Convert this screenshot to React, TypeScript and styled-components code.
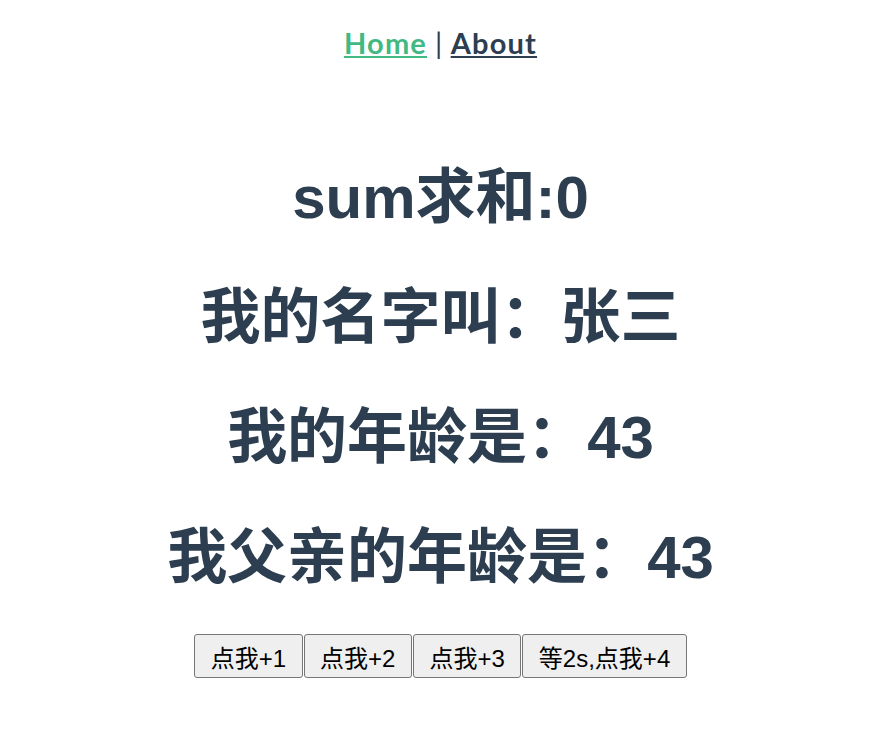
import React, { useState } from "react";
import styled, { createGlobalStyle } from "styled-components";

const GlobalStyle = createGlobalStyle`
  body {
    margin: 0;
    background: #ffffff;
  }
`;

const App = () => {
  const [sum, setSum] = useState<number>(0);
  const name = "张三";
  const age = 43;
  const fatherAge = 43;

  return (
    <>
      <GlobalStyle />
      <Container>
        <Nav>
          <NavLink href="#/" $active>
            Home
          </NavLink>
          <Separator> | </Separator>
          <NavLink href="#/about">About</NavLink>
        </Nav>
        <Main>
          <Title>sum求和:{sum}</Title>
          <Title>我的名字叫：{name}</Title>
          <Title>我的年龄是：{age}</Title>
          <Title>我父亲的年龄是：{fatherAge}</Title>
        </Main>
        <ButtonSection>
          <Button onClick={() => setSum(sum + 1)}>点我+1</Button>
          <Button onClick={() => setSum(sum + 2)}>点我+2</Button>
          <Button onClick={() => setSum(sum + 3)}>点我+3</Button>
          <Button onClick={() => setTimeout(() => setSum((s) => s + 4), 2000)}>
            等2s,点我+4
          </Button>
        </ButtonSection>
      </Container>
    </>
  );
};

export default App;

const Container = styled.div`
  font-family: "Liberation Sans", Arial, "Noto Sans CJK SC", sans-serif;
  text-align: center;
  color: #2c3e50;
`;

const Nav = styled.div`
  padding: 26px 0 0;
  font-family: Lato, "Liberation Sans", sans-serif;
  font-size: 29px;
  line-height: 34px;
  letter-spacing: 1.2px;
`;

const NavLink = styled.a<{ $active?: boolean }>`
  font-weight: bold;
  color: ${(props) => (props.$active ? "#42b983" : "#2c3e50")};
  text-decoration: underline;
`;

const Separator = styled.span`
  white-space: pre;
  letter-spacing: 0.5px;
`;

const Main = styled.div`
  display: flex;
  flex-direction: column;
  gap: 50px;
  padding-top: 103px;
`;

const Title = styled.h1`
  margin: 0;
  font-size: 60px;
  line-height: 70px;
  font-weight: bold;
`;

const ButtonSection = styled.div`
  display: flex;
  justify-content: center;
  gap: 1px;
  margin-top: 41px;
`;

const Button = styled.button`
  height: 44px;
  padding: 0 15.5px;
  font-family: "Liberation Sans", Arial, "Noto Sans CJK SC", sans-serif;
  font-size: 24px;
  color: #000000;
  background-color: #efefef;
  border: 1px solid #767676;
  border-radius: 3px;
  cursor: pointer;
`;
